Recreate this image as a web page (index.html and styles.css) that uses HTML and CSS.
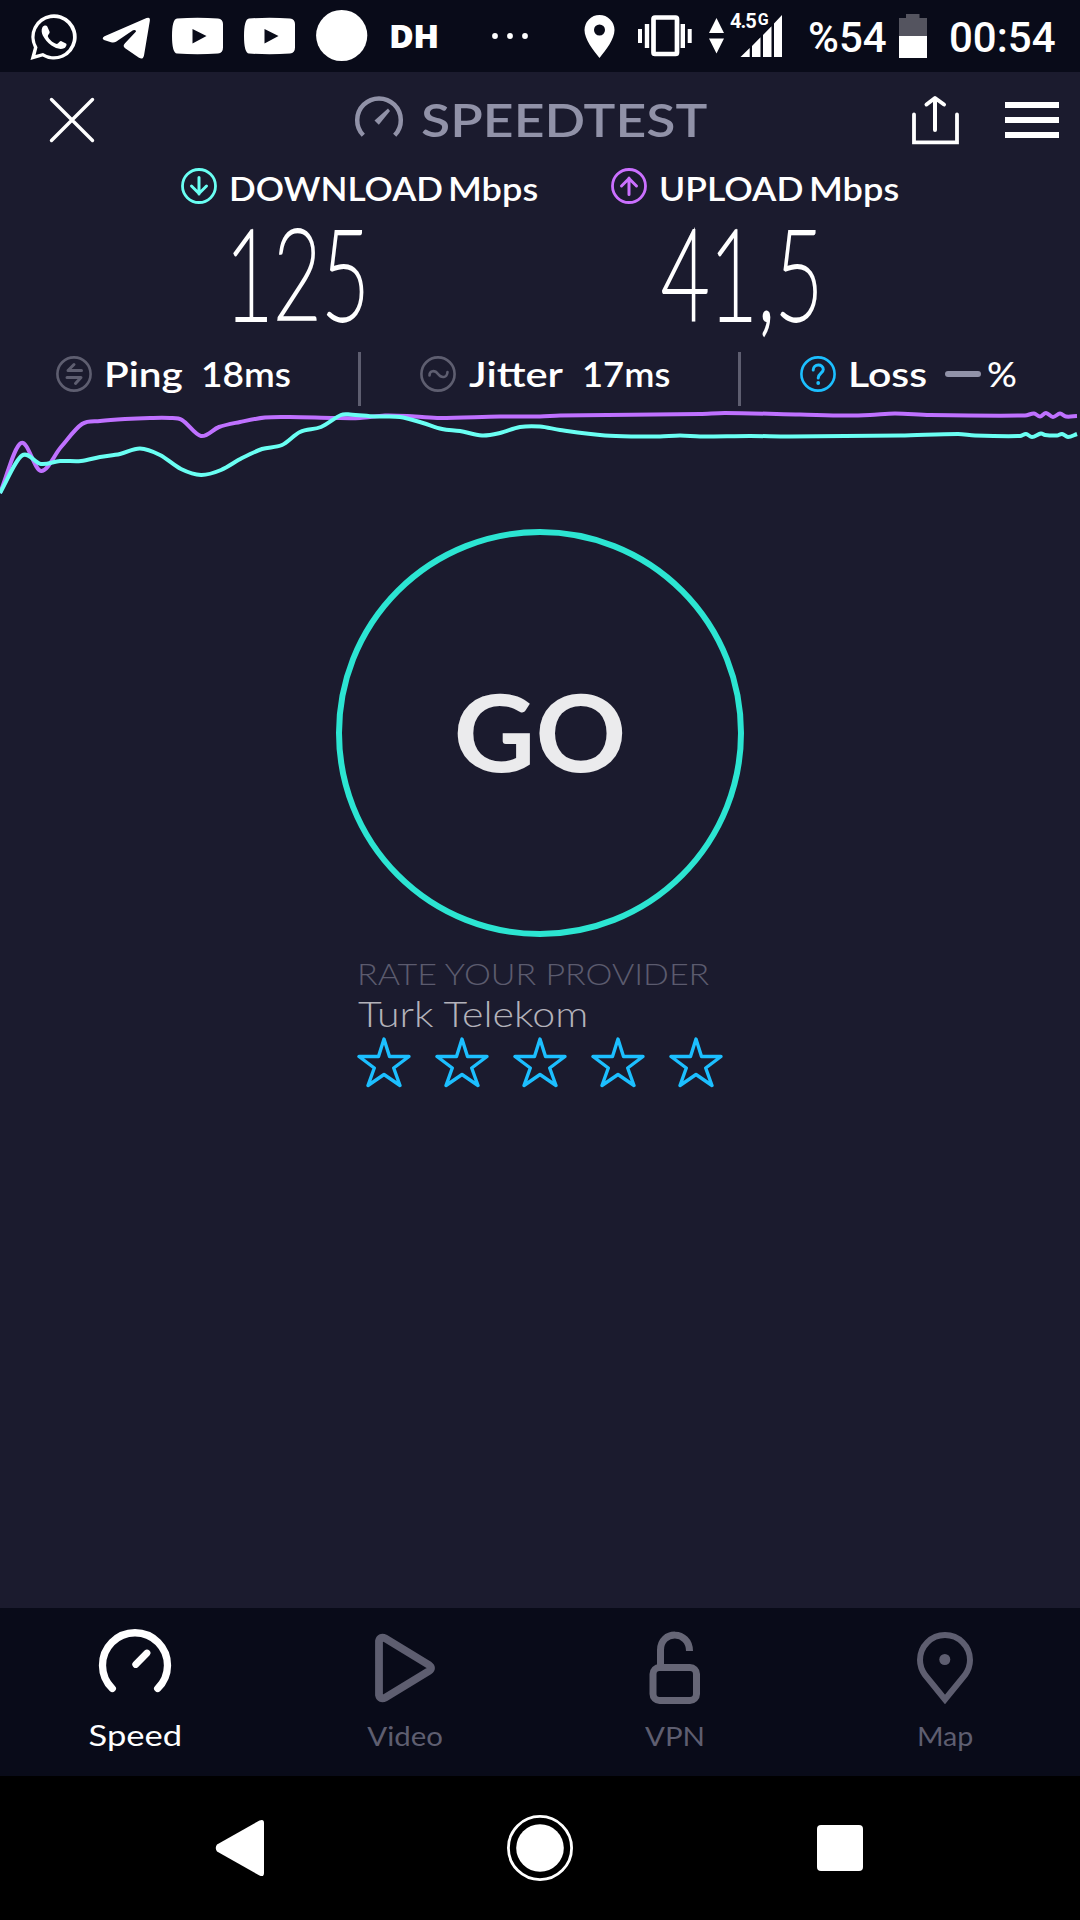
FILE: index.html
```html
<!DOCTYPE html>
<html lang="en">
<head>
<meta charset="utf-8">
<title>Speedtest</title>
<link rel="stylesheet" href="styles.css">
</head>
<body>
<div class="screen">
  <header class="status">
    <div class="notifications">
      <svg width="360" height="72" viewBox="20 0 360 72" fill="#fff">
        <path d="M30.5 60 L33.9 47.5 A22.7 22.7 0 1 1 42.5 56.5 Z M35.5 55 L43 53 A19.2 19.2 0 1 0 37.5 47.3 Z" fill-rule="evenodd"/>
        <path d="M42.3 27.5 C43.5 25.4 46.5 25 47.3 26.6 L49.6 31.8 C50.2 33.4 47.6 35 47.8 36.3 C49 39.5 53 43 56.8 44 C58.3 44 59.5 40.8 61 41 L66 43.4 C67.5 44.5 65.5 47.6 64 48.3 C60 50 55.5 48.2 51.5 45.6 C47.5 42.6 44.5 39 42.8 35.6 C41.6 33 41.2 29.8 42.3 27.5 Z"/>
        <path d="M104.5 36.3 L146.5 18 Q150.5 16.5 149.8 21 L144 55.5 Q143 60.2 139 57.8 L125.5 48.6 Q122 46.3 125 43.3 L136 31.5 Q136.2 29.2 133 30.2 L116 41.8 Q114 43 111 42.3 L104 40 Q101.2 38.2 104.5 36.3 Z"/>
        <path fill-rule="evenodd" d="M177 18.4 Q197.500 17.200 218 18.400 Q223 19 223 24 V47.500 Q223 53 218 53.600 Q197.500 54.800 177 53.600 Q172 53 172 36 Q172 19 177 18.400 Z M192.500 29 V43.500 L206.500 36 Z"/>
        <path fill-rule="evenodd" d="M249 18.400 Q269.500 17.200 290 18.400 Q295 19 295 24 V47.500 Q295 53 290 53.600 Q269.500 54.800 249 53.600 Q244 53 244 36 Q244 19 249 18.400 Z M264.500 29 V43.500 L278.500 36 Z"/>
        <circle cx="341.700" cy="35.500" r="25.600"/>
      </svg>
      <span class="dh">DH</span>
      <svg class="more" width="40" height="72" viewBox="490 0 40 72" fill="#fff"><circle cx="495" cy="36" r="2.900"/><circle cx="510" cy="36" r="2.900"/><circle cx="525" cy="36" r="2.900"/></svg>
    </div>
    <div class="system">
      <svg width="110" height="72" viewBox="584 0 110 72" fill="#fff">
        <path fill-rule="evenodd" d="M599.500 15 A15 15 0 0 1 614.500 30 C614.500 39 606 50 599.500 58 C593 50 584.500 39 584.500 30 A15 15 0 0 1 599.500 15 Z M599.500 24.500 A5.500 5.500 0 1 0 599.500 35.500 A5.500 5.500 0 1 0 599.500 24.500 Z"/>
        <rect x="653.500" y="17.500" width="23.500" height="36.500" rx="1.500" fill="none" stroke="#fff" stroke-width="4.700"/>
        <path d="M638 29h4v14h-4z M644.800 24h4.400v24h-4.400z M680.600 24h4.400v24h-4.400z M687.700 29h4v14h-4z"/>
      </svg>
      <div class="signal">
        <svg width="76" height="72" viewBox="708 0 76 72" fill="#fff"><path d="M716.500 18 L724 33 H709 Z M716.500 53.500 L724 38.500 H709 Z M740.500 57 L749.700 48 V57 Z M752 46 L760.500 37.200 V57 H752 Z M763 35 L771.500 26.200 V57 H763 Z M774 23.500 L782 15 V57 H774 Z"/></svg>
        <span class="net">4.5<small>G</small></span>
      </div>
      <span class="percent">%54</span>
      <svg class="battery" width="30" height="72" viewBox="898 0 30 72"><path fill="#54545f" d="M906 14h13.500v4H927v19H899V18h7z"/><path fill="#fff" d="M899 36h28v22h-28z"/></svg>
      <span class="clock">00:54</span>
    </div>
  </header>

  <div class="topbar">
    <svg class="close" width="48" height="48" viewBox="48 96 48 48"><path d="M51.500 99.500 L92.500 140.500 M92.500 99.500 L51.500 140.500" stroke="#fff" stroke-width="3.400" stroke-linecap="round"/></svg>
    <div class="brand">
      <svg width="50" height="48" viewBox="354 96 50 48"><path d="M363.300 135.300 A21.800 21.800 0 1 1 394.700 135.300" fill="none" stroke="#9192a8" stroke-width="4.500"/><path fill="#9192a8" d="M374.500 120.500 L388 108.500 L390 111 L378.800 124.800 Z"/></svg>
      <span class="name">SPEEDTEST</span>
    </div>
    <svg class="share" width="50" height="50" viewBox="911 95 50 50" fill="none" stroke="#fff" stroke-width="3.800" stroke-linecap="round"><path d="M914 114.500 V142.300 H957 V114.500"/><path d="M935 130 V98.500 M926.500 104.500 L935 98 L944 104.500" stroke-width="4" stroke-linejoin="round"/></svg>
    <div class="menu"><i></i><i></i><i></i></div>
  </div>

  <section class="results">
    <div class="result">
      <div class="label">
        <svg width="36" height="36" viewBox="0 0 36 36" fill="none" stroke="#6afff3" stroke-width="2.800"><circle cx="18" cy="18" r="16.500"/><path d="M18 9.500 V26 M10.500 18 L18 25.500 L25.500 18" stroke-width="3" stroke-linecap="round" stroke-linejoin="round"/></svg>
        <span class="word w-download">DOWNLOAD</span><span class="word w-mbps">Mbps</span>
      </div>
      <div class="value">125</div>
    </div>
    <div class="result">
      <div class="label">
        <svg width="36" height="36" viewBox="0 0 36 36" fill="none" stroke="#cb70ff" stroke-width="2.800"><circle cx="18" cy="18" r="16.500"/><path d="M18 26.500 V10 M10.500 18 L18 10.500 L25.500 18" stroke-width="3" stroke-linecap="round" stroke-linejoin="round"/></svg>
        <span class="word w-upload">UPLOAD</span><span class="word w-mbps">Mbps</span>
      </div>
      <div class="value value-up">41,5</div>
    </div>
  </section>

  <section class="stats">
    <div class="stat ping">
      <svg width="36" height="36" viewBox="0 0 36 36" fill="none" stroke="#5e5e70" stroke-width="2.600" stroke-linecap="round" stroke-linejoin="round"><circle cx="18" cy="18" r="16.600"/><path d="M25.500 14.500 H12 L18 8.500 M11 21.500 H25 L19.500 27.500" stroke-width="3"/></svg>
      <span class="txt t-ping">Ping</span><span class="txt t-18">18ms</span>
    </div>
    <div class="stat jitter">
      <svg width="36" height="36" viewBox="0 0 36 36" fill="none" stroke="#5e5e70" stroke-width="2.600" stroke-linecap="round"><circle cx="18" cy="18" r="16.600"/><path d="M9.500 19.500 C9.500 14 15 14 18 18 C21.500 22.500 27 22 27.500 16"/></svg>
      <span class="txt t-jitter">Jitter</span><span class="txt t-17">17ms</span>
    </div>
    <div class="stat loss">
      <svg width="36" height="36" viewBox="0 0 36 36" fill="none" stroke="#1cbfff" stroke-width="2.600" stroke-linecap="round"><circle cx="18" cy="18" r="16.600"/><path d="M13.200 14 C13.200 7.500 23.300 7.500 23.300 13.500 C23.300 17 18.200 17.500 18.200 22" stroke-width="3"/><circle cx="18.200" cy="27" r="1.900" fill="#1cbfff" stroke="none"/></svg>
      <span class="txt t-loss">Loss</span><i class="dash"></i><span class="txt t-pct">%</span>
    </div>
  </section>

  <svg class="chart" width="1080" height="96" viewBox="0 404 1080 96"><path id="upload"/><path id="download"/></svg>

  <main class="main">
    <button class="go"><span>GO</span></button>
    <div class="rate">
      <div class="rate-title">RATE YOUR PROVIDER</div>
      <div class="provider">Turk Telekom</div>
      <div class="stars">
        <svg viewBox="0 0 54 54"><path d="M27 3 L32.500 20.500 H52 L36.700 32 L43 49.500 L27 38.500 L11 49.500 L17.300 32 L2 20.500 H21.500 Z"/></svg>
        <svg viewBox="0 0 54 54"><path d="M27 3 L32.500 20.500 H52 L36.700 32 L43 49.500 L27 38.500 L11 49.500 L17.300 32 L2 20.500 H21.500 Z"/></svg>
        <svg viewBox="0 0 54 54"><path d="M27 3 L32.500 20.500 H52 L36.700 32 L43 49.500 L27 38.500 L11 49.500 L17.300 32 L2 20.500 H21.500 Z"/></svg>
        <svg viewBox="0 0 54 54"><path d="M27 3 L32.500 20.500 H52 L36.700 32 L43 49.500 L27 38.500 L11 49.500 L17.300 32 L2 20.500 H21.500 Z"/></svg>
        <svg viewBox="0 0 54 54"><path d="M27 3 L32.500 20.500 H52 L36.700 32 L43 49.500 L27 38.500 L11 49.500 L17.300 32 L2 20.500 H21.500 Z"/></svg>
      </div>
    </div>
  </main>

  <nav class="tabs">
    <a class="tab active">
      <svg viewBox="95 1626.500 80 84" stroke="#fff" stroke-width="7.300" stroke-linecap="round"><path d="M112.300 1691 A32.500 32.500 0 1 1 157.700 1691"/><path d="M135.700 1667 L147 1655.500" stroke-width="6.800"/></svg>
      <span class="t-speed">Speed</span>
    </a>
    <a class="tab">
      <svg viewBox="365 1624 80 84" stroke="#5e5e70" stroke-width="7.800" stroke-linejoin="round"><path d="M379 1641 Q380 1636 385.500 1638.500 L429 1665 Q433 1668 429 1671 L385.500 1697.500 Q380 1700 379 1695 Z"/></svg>
      <span class="t-video">Video</span>
    </a>
    <a class="tab">
      <svg viewBox="635 1624 80 84" stroke="#666676" stroke-width="7"><rect x="653" y="1667.500" width="43.500" height="33" rx="6.500"/><path d="M660.500 1667 V1650 C660.500 1630 689.500 1630 689.500 1651"/></svg>
      <span class="t-vpn">VPN</span>
    </a>
    <a class="tab">
      <svg viewBox="905 1624 80 84" stroke="#5e5e70" stroke-width="6"><path d="M945 1699.500 L925 1675 C921.500 1670 920 1665.500 920 1660 A25 25 0 0 1 970 1660 C970 1665.500 968.500 1670 965 1675 Z"/><circle cx="944.800" cy="1659.500" r="5.500" fill="#5e5e70" stroke="none"/></svg>
      <span class="t-map">Map</span>
    </a>
  </nav>

  <footer class="navbar">
    <svg class="back" width="52" height="60" viewBox="214 1818 52 60"><path fill="#fff" d="M217 1844.500 L259.500 1820.500 Q264 1818.500 264 1823 V1873 Q264 1877.500 259.500 1875.500 L217 1851.500 Q214.500 1848 217 1844.500 Z"/></svg>
    <svg class="home" width="68" height="68" viewBox="0 0 68 68"><circle cx="34" cy="34" r="31.600" fill="none" stroke="#fff" stroke-width="2.800"/><circle cx="34" cy="34" r="23.800" fill="#fff"/></svg>
    <i class="recent"></i>
  </footer>
</div>
<script src="chart.js"></script>
</body>
</html>
```
FILE: styles.css
```css
* { box-sizing: border-box; }
body { margin: 0; background: #000; }
svg { display: block; flex: none; }
i { display: block; flex: none; }

.screen {
  width: 1080px;
  height: 1920px;
  display: flex;
  flex-direction: column;
  background: #1b1b2e;
  color: #fff;
  font-family: Lato, "Open Sans", sans-serif;
  overflow: hidden;
}
.screen > * { flex: none; }
.screen span { white-space: nowrap; }

/* status bar */
.status {
  height: 72px;
  display: flex;
  justify-content: space-between;
  background: #090b19;
  padding: 0 24px 0 20px;
}
.notifications, .system { display: flex; align-items: center; }
.dh { width: 50px; margin-left: 9px; font: 800 32px/70px "Open Sans", sans-serif; letter-spacing: -0.5px; transform: scaleX(1.06); transform-origin: left; }
.more { margin-left: 51px; }
.signal { position: relative; margin-left: 14px; }
.net { position: absolute; left: 22px; top: 8px; font: 700 20px/24px Roboto, sans-serif; letter-spacing: -1px; }
.net small { font-size: 16px; vertical-align: 3px; margin-left: 2px; }
.percent, .clock { font: 500 42px/72px Roboto, sans-serif; padding-top: 3px; }
.percent { width: 80px; margin-left: 24px; }
.battery { margin-left: 10px; }
.clock { width: 107px; margin-left: 21px; }

/* title bar */
.topbar { height: 96px; display: flex; align-items: center; padding-left: 48px; }
.brand { display: flex; align-items: center; margin-left: 258px; }
.name {
  width: 286px;
  margin-left: 17px;
  font-size: 47px;
  font-weight: 600;
  line-height: 94px;
  padding-bottom: 2px;
  color: #9192a8;
  transform: scaleX(1.138);
  transform-origin: left;
}
.share { margin-left: 204px; }
.menu { display: flex; flex-direction: column; gap: 9px; margin-left: 44px; }
.menu i { width: 54px; height: 6px; background: #fff; }

/* download and upload */
.results { height: 170px; display: flex; padding-left: 181px; }
.result { width: 430px; }
.label { display: flex; height: 36px; }
.word { font-size: 32px; font-weight: 600; line-height: 41px; transform-origin: left; }
.w-download { width: 219px; margin-left: 12px; transform: scaleX(1.1); }
.w-upload { width: 150px; margin-left: 12px; transform: scaleX(1.11); }
.w-mbps { transform: scaleX(1.13); }
.value {
  width: 220px;
  margin: 5px 0 0 44px;
  font-size: 126px;
  font-weight: 200;
  line-height: 126px;
  transform: scaleX(.66);
  transform-origin: left;
  -webkit-text-stroke: 3.800px #fff;
}
.value-up { margin-left: 50px; }

/* ping, jitter, loss */
.stats { height: 66px; display: flex; padding-left: 56px; }
.stat { display: flex; align-items: center; height: 72px; }
.txt { font-size: 35px; font-weight: 600; line-height: 70px; padding-bottom: 2px; transform-origin: left; }
.ping { width: 302px; }
.jitter { width: 380px; padding-left: 62px; }
.loss { padding-left: 62px; }
.ping + .stat, .loss {
  background: linear-gradient(#5e5e70, #5e5e70) no-repeat 0 14px / 3px 54px;
}
.t-ping { width: 97px; margin-left: 12px; transform: scaleX(1.16); }
.t-18 { transform: scaleX(1.06); }
.t-jitter { width: 113px; margin-left: 13px; transform: scaleX(1.19); }
.t-17 { transform: scaleX(1.04); }
.t-loss { width: 97px; margin-left: 12px; transform: scaleX(1.17); }
.dash { width: 36px; height: 6px; border-radius: 3px; background: #9192a8; }
.t-pct { margin-left: 6px; font-weight: 500; transform: scaleX(1.06); }

.chart path { fill: none; stroke-width: 4; stroke-linejoin: round; }
.chart #upload { stroke: #bf71ff; }
.chart #download { stroke: #6afff3; }

/* start button and rating */
.main { height: 1108px; padding-top: 29px; display: flex; flex-direction: column; align-items: center; }
.go {
  width: 408px;
  height: 408px;
  padding: 0 0 5px;
  border: 6px solid #2ce5d2;
  border-radius: 50%;
  background: none;
  color: #ebebed;
  font: 700 107px/1 Lato, sans-serif;
}
.go span { display: block; transform: scaleX(1.055); }
.rate { width: 366px; margin-top: 17px; font-weight: 300; white-space: nowrap; }
.rate-title { width: 320px; font-size: 29.500px; line-height: 39px; color: #5c5b6e; transform: scaleX(1.152); transform-origin: left; }
.provider { width: 200px; font-size: 34.500px; line-height: 42px; color: #b3b2ba; transform: scaleX(1.19); transform-origin: left; margin-left: 1px; }
.stars { display: flex; gap: 24px; margin-top: 1px; }
.stars svg { width: 54px; height: 54px; fill: none; stroke: #1cbfff; stroke-width: 3.400; stroke-linejoin: round; }

/* tabs */
.tabs { height: 168px; display: flex; background: #090b19; }
.tab { flex: 1; display: flex; flex-direction: column; align-items: center; padding-top: 16px; color: #5e5e70; font-size: 26.500px; line-height: 40px; }
.tab svg { width: 80px; height: 84px; fill: none; }
.tab span { margin-top: 8px; transform: scaleX(1.11); }
.active { color: #fff; font-size: 29px; }
.tab .t-speed { margin-top: 7px; transform: scaleX(1.19); }
.tab .t-map { transform: scaleX(1.08); }

/* system navigation */
.navbar { height: 144px; display: flex; align-items: center; background: #000; padding-left: 214px; }
.home { margin-left: 240px; }
.recent { width: 46px; height: 46px; margin-left: 243px; border-radius: 4px; background: #fff; }
```
FILE: chart.js
```js
// Speed samples as x,y pairs in the chart's coordinates.
var series = {
  upload: [0,493, 21,443, 41,471, 61,447, 82,424, 100,421, 125,419, 150,418, 170,418, 182,420, 201,436, 219,427, 240,422, 265,417.5, 290,417, 335,418, 360,418, 385,415.5, 415,416.5, 440,418, 500,416.5, 540,416.5, 560,415.5, 700,414, 725,413, 800,414.5, 845,415.5, 870,415, 895,413.5, 930,415, 1025,415.5, 1034,413.5, 1040,416.5, 1046,413, 1053,417, 1060,413.5, 1066,416.5, 1077,416],
  download: [0,493, 22,455.5, 41,464, 60,461, 81,461, 100,457, 120,454, 140,448.5, 160,455, 181,469, 201,475, 221,470, 242,458, 262,449, 282,445, 300,432, 321,427, 341,415, 350,414.5, 375,416.5, 400,417, 423,423, 442,429, 460,431, 482,435.5, 500,433, 520,427, 540,426.5, 560,430, 605,435.5, 640,436.5, 660,436.5, 680,435.5, 700,436.5, 750,436, 790,436.5, 900,435.5, 958,434, 975,435.5, 1020,436, 1026,434, 1032,437, 1041,433.5, 1045,435, 1057,435.5, 1062,434, 1068,437, 1077,434]
};

// Smooth curve through every sample; tangents follow the neighbouring samples.
function smooth(p) {
  var n = p.length / 2;
  function slope(i) {
    if (i === 0 || i === n - 1) return null;
    return (p[2 * i + 3] - p[2 * i - 1]) / (p[2 * i + 2] - p[2 * i - 2]);
  }
  var d = 'M' + p[0] + ' ' + p[1];
  for (var i = 0; i < n - 1; i++) {
    var x0 = p[2 * i], y0 = p[2 * i + 1], x1 = p[2 * i + 2], y1 = p[2 * i + 3];
    var h = (x1 - x0) / 3, s = (y1 - y0) / (x1 - x0);
    var a = slope(i), b = slope(i + 1);
    if (a === null) a = s;
    if (b === null) b = s;
    d += ' C' + [x0 + h, y0 + a * h, x1 - h, y1 - b * h, x1, y1].join(' ');
  }
  return d;
}

Object.keys(series).forEach(function (id) {
  document.getElementById(id).setAttribute('d', smooth(series[id]));
});
```
